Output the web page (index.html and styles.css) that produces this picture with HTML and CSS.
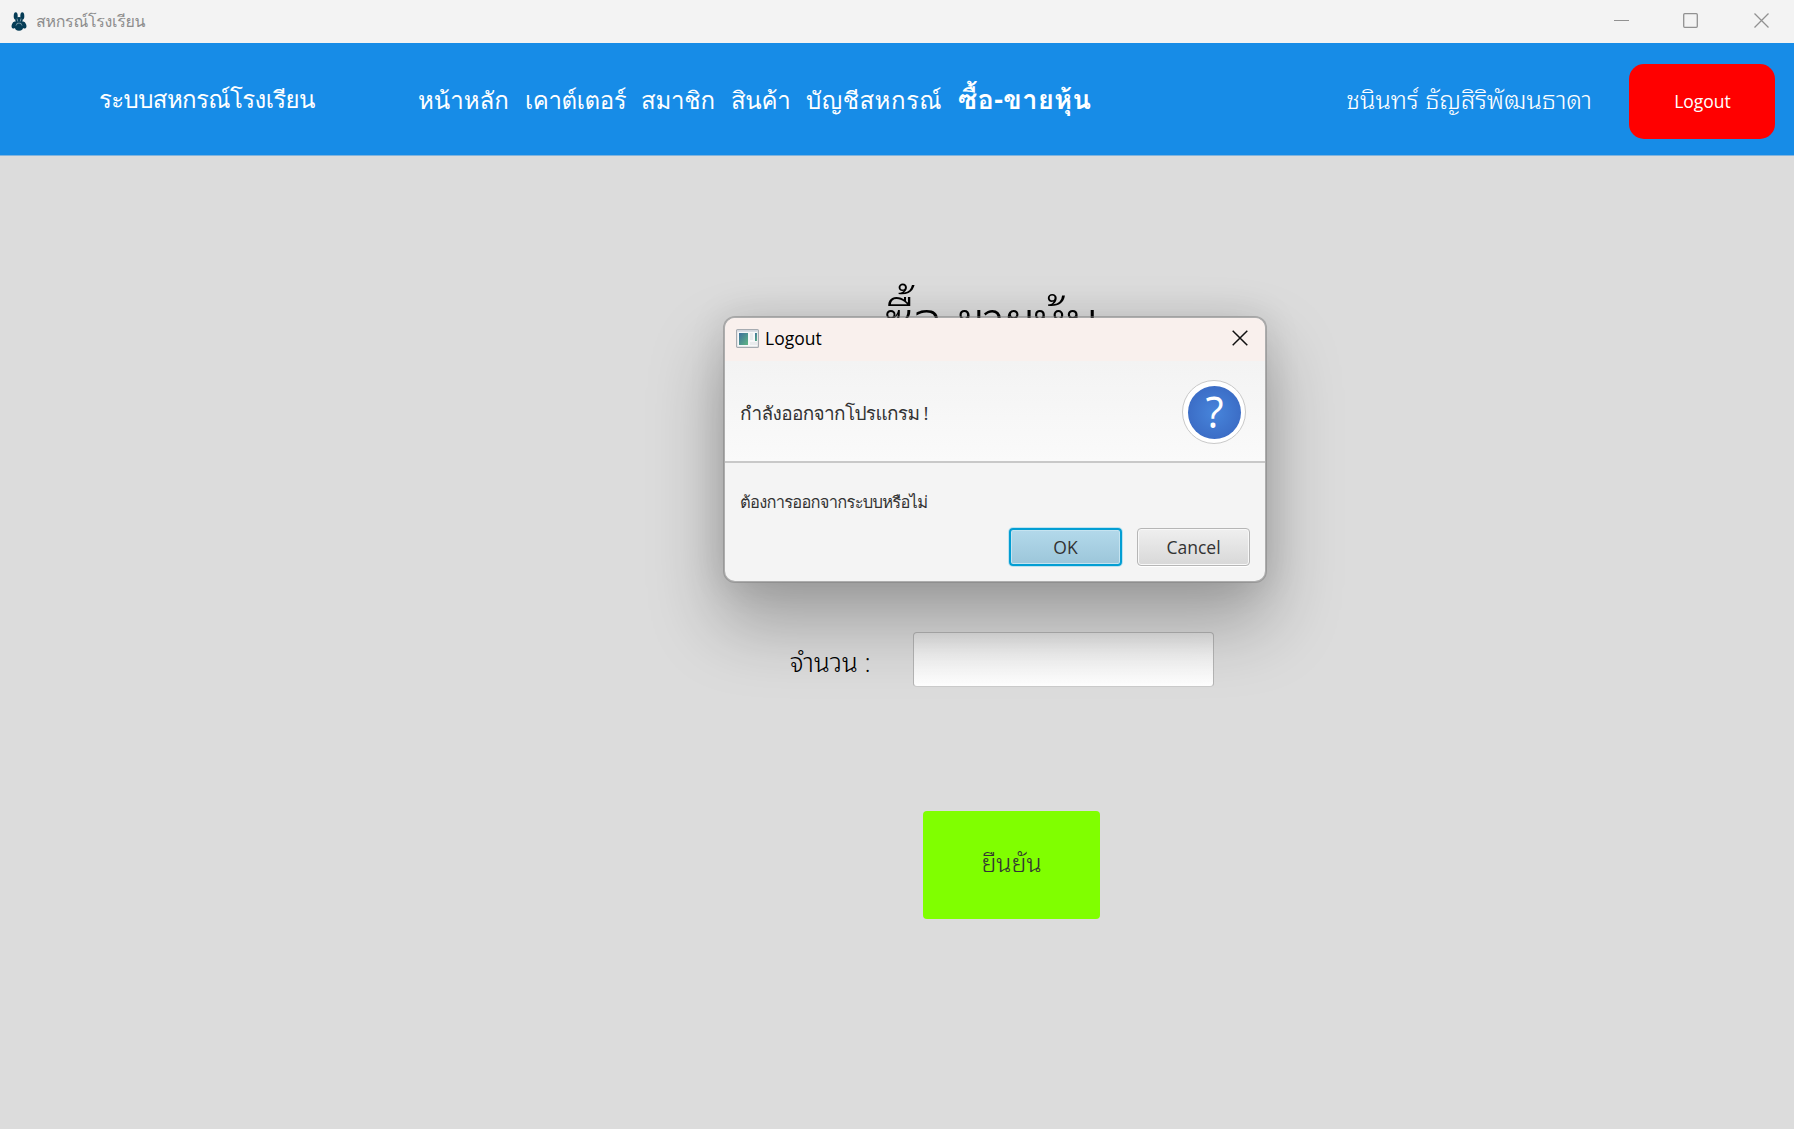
FILE: index.html
```html
<!DOCTYPE html>
<html lang="th">
<head>
<meta charset="utf-8">
<title>สหกรณ์โรงเรียน</title>
<link rel="stylesheet" href="styles.css">
</head>
<body>
<header class="titlebar">
  <svg class="app-icon" viewBox="0 0 24 24"><g fill="#053c56"><ellipse cx="6.700" cy="6" rx="2" ry="3.800"/><ellipse cx="13.300" cy="6" rx="2" ry="3.800"/><circle cx="10" cy="10.500" r="3.600"/><ellipse cx="5.200" cy="15" rx="2.400" ry="3.600" transform="rotate(20 5.200 15)"/><ellipse cx="14.800" cy="15" rx="2.400" ry="3.600" transform="rotate(-20 14.800 15)"/><ellipse cx="10" cy="17" rx="4.200" ry="3.700"/></g><path d="M8 8.500l.8 3M12 8.500l-.8 3M7 15.500l1.500-2.300h3l1.500 2.300" fill="none" stroke="#d9e4e8" stroke-width=".5"/></svg>
  <span class="window-title">สหกรณ์โรงเรียน</span>
  <svg class="controls" viewBox="0 0 156 16" fill="none" stroke="#919191"><path d="M0 7.500h15"/><rect x="69.700" y=".7" width="13.600" height="13.600" rx="1" stroke-width="1.300"/><path d="M140.500.500l14 14m0-14l-14 14" stroke-width="1.300"/></svg>
</header>
<nav class="navbar">
  <span class="brand">ระบบสหกรณ์โรงเรียน</span>
  <div class="links">
    <a class="link-home">หน้าหลัก</a><a class="link-counter">เคาต์เตอร์</a><a class="link-member">สมาชิก</a><a class="link-goods">สินค้า</a><a class="link-account">บัญชีสหกรณ์</a><a class="link-share">ซื้อ-ขายหุ้น</a>
  </div>
  <span class="user">ชนินทร์ ธัญสิริพัฒนธาดา</span>
  <button class="logout">Logout</button>
</nav>
<main class="page">
  <h1 class="heading">ซื้อ-ขายหุ้น</h1>
  <div class="amount"><label class="amount-label" for="amount">จำนวน :</label><input class="field" id="amount" type="text"></div>
  <button class="confirm">ยืนยัน</button>
</main>
<section class="dialog">
  <div class="dialog-title">
    <svg class="dialog-icon" viewBox="0 0 23 19"><defs><linearGradient id="g" x2="1" y2="1"><stop stop-color="#3e6f9d"/><stop offset="1" stop-color="#5fb783"/></linearGradient></defs><rect x=".6" y=".6" width="21.800" height="17.800" rx="1" fill="#f7f8f9" stroke="#a6abb1" stroke-width="1.200"/><path d="M1.500 2h20" stroke="#cbd0da" stroke-width="1.300"/><path d="M3 4h9v12H3z" fill="url(#g)"/><path d="M14 4h3v7h-3zM14 13h7v3h-7z" fill="#e9ebed"/><path d="M19 4h2v8h-2z" fill="url(#g)"/></svg>
    <span class="dialog-name">Logout</span>
    <svg class="dialog-close" viewBox="0 0 16 16"><path d="M.7.700l14.600 14.600m0-14.600L.7 15.300" stroke="#111" stroke-width="1.500"/></svg>
  </div>
  <div class="dialog-header"><span class="dialog-heading">กำลังออกจากโปรแกรม !</span><span class="question"><span class="question-disc"><span class="question-mark">?</span></span></span></div>
  <div class="dialog-body">
    <p class="message">ต้องการออกจากระบบหรือไม่</p>
    <div class="actions"><button class="button button-default">OK</button><button class="button">Cancel</button></div>
  </div>
</section>
</body>
</html>
```

FILE: styles.css
```css
* { box-sizing: border-box; }
body {
  margin: 0;
  width: 1794px;
  height: 1129px;
  overflow: hidden;
  background: #dcdcdc;
  font-family: "Open Sans", Loma, sans-serif;
  white-space: nowrap;
}
button { font: inherit; border: 0; padding: 0; }

.titlebar {
  height: 43px;
  display: flex;
  align-items: center;
  padding-left: 9px;
  background: #f3f3f3;
  color: #8d8d8d;
  font-size: 16px;
}
.app-icon { width: 24px; height: 24px; margin-right: 3px; }
.window-title { letter-spacing: -.3px; }
.controls { width: 156px; height: 16px; margin: 0 24px 1px auto; }

.navbar {
  height: 113px;
  display: flex;
  align-items: center;
  padding: 4px 19px 0 99px;
  background: #178ce7;
  border-bottom: 1px solid #82b4dd;
  color: #fff;
  font-size: 24px;
}
.brand { width: 319px; letter-spacing: -.6px; padding-bottom: 3px; }
.links { display: flex; align-items: baseline; padding-bottom: 4px; }
.link-home { width: 107px; }
.link-counter { width: 116px; letter-spacing: -.4px; }
.link-member { width: 90px; letter-spacing: -.2px; }
.link-goods { width: 75px; letter-spacing: -.3px; }
.link-account { width: 152px; letter-spacing: .5px; }
.link-share { font-size: 27px; font-weight: 700; letter-spacing: .45px; }
.user {
  margin-left: auto;
  padding-bottom: 7px;
  font-family: "Open Sans", "Noto Sans Thai Looped", sans-serif;
  font-size: 25.500px;
  font-weight: 300;
  letter-spacing: -.05px;
}
.logout {
  width: 146px;
  height: 75px;
  margin-left: 37px;
  padding-left: 1px;
  background: #f00;
  border-radius: 15px;
  color: #fff;
  font-size: 17.500px;
}

.page {
  font-family: "Open Sans", "Noto Sans Thai Looped", sans-serif;
  font-weight: 300;
  color: #000;
}
.heading {
  height: 476px;
  margin: 0;
  padding: 118px 0 0 885px;
  font-size: 53px;
  font-weight: 350;
  letter-spacing: -1.500px;
}
.amount { display: flex; align-items: center; padding-left: 790px; font-size: 26px; }
.amount-label { width: 123px; }
.field {
  width: 301px;
  height: 55px;
  border: 1px solid #b5b5b5;
  border-bottom-color: #ccc;
  border-radius: 4px;
  background: linear-gradient(#e4e4e4, #f3f3f3 40%, #fff);
}
.confirm {
  display: block;
  width: 177px;
  height: 108px;
  margin: 124px 0 0 923px;
  padding-bottom: 8px;
  background: #80ff00;
  border-radius: 4px;
  color: #333;
  font-size: 25px;
}

.dialog {
  position: absolute;
  left: 723px;
  top: 316px;
  width: 544px;
  height: 267px;
  border: 2px solid rgba(125, 125, 125, .5);
  border-radius: 12px;
  background: #f4f4f4;
  background-clip: padding-box;
  box-shadow: 0 38px 70px 4px rgba(0, 0, 0, .27), 0 0 36px rgba(0, 0, 0, .1);
  color: #333;
}
.dialog-title {
  height: 43px;
  display: flex;
  align-items: center;
  padding: 0 17px 3px 11px;
  background: #f9f0ed;
  border-radius: 10px 10px 0 0;
  color: #000;
  font-size: 17.500px;
}
.dialog-icon { width: 23px; height: 19px; margin-right: 6px; }
.dialog-close { width: 16px; height: 16px; margin-left: auto; }
.dialog-header {
  height: 102px;
  display: flex;
  align-items: center;
  justify-content: space-between;
  padding: 2px 19px 0 15px;
  border-bottom: 2px solid #c8c8c8;
  background: linear-gradient(#f3f3f3, #fafafa);
  font-size: 19px;
}
.dialog-heading { letter-spacing: -.65px; padding-top: 2px; }
.question {
  width: 64px;
  height: 64px;
  display: grid;
  place-items: center;
  border: 1px solid #c9c9c9;
  border-radius: 50%;
  background: #fff;
}
.question-disc {
  width: 53px;
  height: 53px;
  border-radius: 50%;
  background: radial-gradient(#4785db, #3865bf 95%);
  color: #fff;
  font-size: 44px;
  line-height: 50px;
  text-align: center;
}
.question-mark { display: inline-block; transform: scaleX(.95); }
.dialog-body { padding: 26px 15px 0; font-size: 16.500px; }
.message { height: 39px; margin: 0; letter-spacing: -.75px; }
.actions { display: flex; justify-content: flex-end; gap: 15px; }
.button {
  width: 113px;
  height: 38px;
  border: 1px solid #b6b6b6;
  border-radius: 4px;
  background: linear-gradient(#efefef, #d8d8d8);
  box-shadow: inset 0 0 0 1px #f8f8f8, 0 1px #fff;
  color: #333;
  font-size: 17.500px;
}
.button-default {
  border: 2px solid #039ed3;
  background: linear-gradient(#b3d9eb, #9cc6da);
  box-shadow: inset 0 0 0 1px #c5e3f0, 0 0 0 1px #bde2f0;
}
```
